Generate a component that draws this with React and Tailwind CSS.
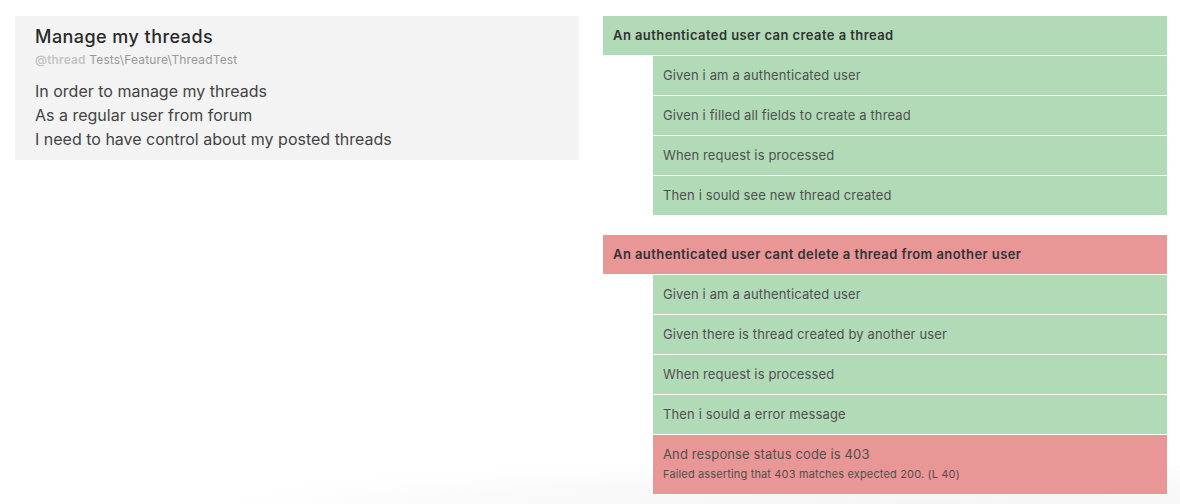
import React from 'react';

const scenarios = [
  {
    title: 'An authenticated user can create a thread',
    failed: false,
    steps: [
      { text: 'Given i am a authenticated user' },
      { text: 'Given i filled all fields to create a thread' },
      { text: 'When request is processed' },
      { text: 'Then i sould see new thread created' },
    ],
  },
  {
    title: 'An authenticated user cant delete a thread from another user',
    failed: true,
    steps: [
      { text: 'Given i am a authenticated user' },
      { text: 'Given there is thread created by another user' },
      { text: 'When request is processed' },
      { text: 'Then i sould a error message' },
      {
        text: 'And response status code is 403',
        error: 'Failed asserting that 403 matches expected 200. (L 40)',
      },
    ],
  },
];

function Step({ step }) {
  const failed = !!step.error;
  return (
    <div
      className={`ml-[50px] mt-px px-[10px] text-[13px] tracking-[0.13px] text-[#505050] ${
        failed ? 'bg-[#e89696] pt-[10px] pb-[11px]' : 'bg-[#b1dab7] h-[39px] flex items-center'
      }`}
    >
      <div className="leading-[19px]">{step.text}</div>
      {failed && <div className="text-[11px] leading-[17px] mt-[2px] tracking-[0.15px]">{step.error}</div>}
    </div>
  );
}

export default function App() {
  return (
    <div className="relative h-[504px] bg-white flex gap-[24px] pl-[15px] pt-[16px] overflow-hidden font-['Inter','Liberation_Sans',sans-serif]">
      {/* faint footer shade */}
      <div className="pointer-events-none absolute bottom-0 left-[230px] w-[1400px] h-[44px] bg-[radial-gradient(ellipse_at_bottom,#f5f5f5_0%,#fafafa_45%,transparent_72%)]" />

      {/* feature card */}
      <div className="relative w-[564px] h-[144px] bg-[#f3f3f3] px-[20px] pt-[9px]">
        <h1 className="text-[18px] leading-[24px] font-medium text-[#2a2a2a] tracking-[0.45px]">Manage my threads</h1>
        <div className="text-[12px] leading-[18px] mt-[2px] text-[#999] tracking-[0.15px]">
          <span className="font-semibold text-[#c4c4c4]">@thread</span> Tests\Feature\ThreadTest
        </div>
        <div className="mt-[10px] text-[16px] leading-[24px] text-[#444]">
          <p>In order to manage my threads</p>
          <p>As a regular user from forum</p>
          <p>I need to have control about my posted threads</p>
        </div>
      </div>

      {/* scenarios */}
      <div className="relative w-[564px] flex flex-col gap-[20px]">
        {scenarios.map((sc, i) => (
          <div key={i}>
            <div
              className={`h-[39px] flex items-center px-[10px] text-[13px] font-semibold tracking-[0.42px] text-[#333] ${
                sc.failed ? 'bg-[#e89696]' : 'bg-[#b1dab7]'
              }`}
            >
              {sc.title}
            </div>
            {sc.steps.map((st, j) => (
              <Step key={j} step={st} />
            ))}
          </div>
        ))}
      </div>
    </div>
  );
}
